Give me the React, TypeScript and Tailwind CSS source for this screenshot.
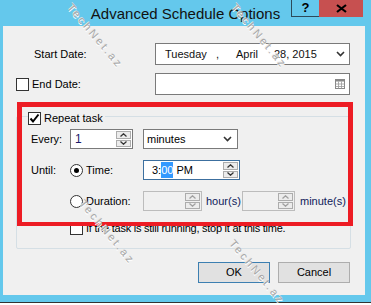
import React from "react";

const font = { fontFamily: '"Liberation Sans", Arial, sans-serif' };

function Chevron({ up = false, className = "" }: { up?: boolean; className?: string }) {
  return (
    <svg width="9" height="6" viewBox="0 0 9 6" className={className}>
      <path
        d={up ? "M1 5 L4.5 1.5 L8 5" : "M1 1 L4.5 4.5 L8 1"}
        fill="none"
        stroke="#333"
        strokeWidth="1.6"
      />
    </svg>
  );
}

function SmallChev({ up = false, color = "#333" }: { up?: boolean; color?: string }) {
  return (
    <svg width="7" height="4" viewBox="0 0 7 4">
      <path d={up ? "M0.5 3.5 L3.5 0.8 L6.5 3.5" : "M0.5 0.5 L3.5 3.2 L6.5 0.5"} fill="none" stroke={color} strokeWidth="1.3" />
    </svg>
  );
}

function Spinner({ disabled = false }: { disabled?: boolean }) {
  const c = disabled ? "#a0a0a0" : "#333";
  return (
    <div className="flex flex-col w-[17px] h-full gap-[1px] p-[1px]">
      <div className="flex-1 flex items-center justify-center border border-[#acacac] bg-[#ececec]">
        <SmallChev up color={c} />
      </div>
      <div className="flex-1 flex items-center justify-center border border-[#acacac] bg-[#ececec]">
        <SmallChev color={c} />
      </div>
    </div>
  );
}

function Checkbox({ checked = false }: { checked?: boolean }) {
  return (
    <div className="w-[13px] h-[13px] border border-[#333] bg-white flex items-center justify-center shrink-0">
      {checked && (
        <svg width="11" height="11" viewBox="0 0 11 11">
          <path d="M1.5 5.5 L4 8.5 L9.5 1.5" fill="none" stroke="#000" strokeWidth="2" />
        </svg>
      )}
    </div>
  );
}

function Radio({ checked = false }: { checked?: boolean }) {
  return (
    <div className="w-[13px] h-[13px] rounded-full border border-[#333] bg-white flex items-center justify-center shrink-0">
      {checked && <div className="w-[5px] h-[5px] rounded-full bg-black" />}
    </div>
  );
}

function Watermark({ left, top }: { left: number; top: number }) {
  return (
    <div
      className="absolute origin-top-left rotate-[50deg] text-[11px] tracking-[2.5px] text-[#a8a8a8] whitespace-nowrap pointer-events-none"
      style={{ left, top, textShadow: "1px 1px 0 #ffffff, -1px 0 0 #e8e8e8", ...font }}
    >
      TechNet.az
    </div>
  );
}

export default function App() {
  return (
    <div className="w-[371px] h-[305px] bg-white relative overflow-hidden text-[11px] text-black" style={font}>
      <div className="h-[303px] bg-[#64c8ec] border-b border-[#333] flex flex-col">
        {/* Title bar */}
        <div className="h-[26px] relative flex">
          <div className="absolute left-0 right-0 top-[3px] text-center text-[15px] text-[#111]">
            Advanced Schedule Options
          </div>
          <div className="ml-auto mr-[8px] flex h-[17px]">
            <div className="w-[28px] border-l border-b border-[#2c4a5a] flex items-center justify-center font-bold text-[13px]">
              ?
            </div>
            <div className="w-[44px] bg-[#c75050] flex items-center justify-center">
              <svg width="11" height="9" viewBox="0 0 11 9">
                <path d="M1 1 L10 8 M10 1 L1 8" stroke="#000" strokeWidth="2.2" />
              </svg>
            </div>
          </div>
        </div>
        {/* Client */}
        <div className="ml-[3px] w-[362px] h-[269px] bg-[#f0f0f0] relative">
          {/* Start date */}
          <div className="pt-[17px] flex items-center h-[39px]">
            <div className="pl-[31px] w-[152px]">Start Date:</div>
            <div className="w-[195px] h-[22px] border border-[#7a7a7a] bg-white flex items-center text-[11px] text-[#111]">
              <span className="pl-[9px] w-[60px]">Tuesday</span>
              <span className="w-[20px]">,</span>
              <span className="w-[38px]">April</span>
              <span>28, 2015</span>
              <span className="ml-auto mr-[4px]">
                <Chevron />
              </span>
            </div>
          </div>
          {/* End date */}
          <div className="mt-[8px] flex items-center h-[22px]">
            <div className="pl-[13px] w-[152px] flex items-center">
              <Checkbox />
              <span className="ml-[3px]">End Date:</span>
            </div>
            <div className="w-[195px] h-[22px] border border-[#7a7a7a] bg-white flex items-center">
              <svg width="10" height="10" viewBox="0 0 10 10" className="ml-auto mr-[4px]">
                <rect x="0.5" y="0.5" width="9" height="9" fill="#fff" stroke="#888" />
                <rect x="0.5" y="0.5" width="9" height="2" fill="#888" />
                <path d="M0.5 5 H9.5 M0.5 7.5 H9.5 M3.5 2.5 V9.5 M6.5 2.5 V9.5" stroke="#999" strokeWidth="0.8" />
              </svg>
            </div>
          </div>
          {/* Group box */}
          <div className="mt-[21px] ml-[13px] w-[335px] h-[133px] border border-[#d5dfe5] rounded-[2px] relative">
            <div className="absolute top-[-7px] left-[11px] bg-[#f0f0f0] flex items-center pr-[2px]">
              <Checkbox checked />
              <span className="ml-[3px]">Repeat task</span>
            </div>
            {/* Every */}
            <div className="mt-[12px] flex items-center h-[20px]">
              <div className="pl-[14px] w-[53px]">Every:</div>
              <div className="w-[63px] h-[20px] border border-[#7a7a7a] bg-white flex items-center">
                <span className="pl-[4px] text-[12px] text-[#1a1a6a]">1</span>
                <div className="ml-auto h-full">
                  <Spinner />
                </div>
              </div>
              <div className="ml-[10px] w-[95px] h-[20px] border border-[#7a7a7a] bg-white flex items-center">
                <span className="pl-[3px]">minutes</span>
                <span className="ml-auto mr-[5px]">
                  <Chevron />
                </span>
              </div>
            </div>
            {/* Until */}
            <div className="mt-[11px] flex items-center h-[20px]">
              <div className="pl-[14px] w-[53px]">Until:</div>
              <Radio checked />
              <span className="ml-[3px] w-[57px]">Time:</span>
              <div className="w-[97px] h-[20px] border border-[#3c6f9f] bg-white flex items-center">
                <span className="pl-[8px]">3:</span>
                <span className="bg-[#3399ff] text-white">00</span>
                <span className="ml-[3px]">PM</span>
                <div className="ml-auto h-full">
                  <Spinner />
                </div>
              </div>
            </div>
            {/* Duration */}
            <div className="mt-[11px] flex items-center h-[20px]">
              <div className="w-[53px]" />
              <Radio />
              <span className="ml-[3px] w-[57px]">Duration:</span>
              <div className="w-[59px] h-[20px] border border-[#bcbcbc] bg-[#f0f0f0] flex">
                <div className="ml-auto h-full">
                  <Spinner disabled />
                </div>
              </div>
              <span className="ml-[4px] w-[36px] text-[#0f1a5a]">hour(s)</span>
              <div className="w-[53px] h-[20px] border border-[#bcbcbc] bg-[#f0f0f0] flex">
                <div className="ml-auto h-full">
                  <Spinner disabled />
                </div>
              </div>
              <span className="ml-[5px] text-[#0f1a5a]">minute(s)</span>
            </div>
            {/* Stop checkbox */}
            <div className="mt-[11px] flex items-center h-[13px]">
              <div className="w-[53px]" />
              <Checkbox />
              <span className="ml-[3px] tracking-[-0.25px]">If the task is still running, stop it at this time.</span>
            </div>
          </div>
          {/* Buttons */}
          <div className="mt-[13px] flex justify-end pr-[15px] gap-[8px]">
            <div className="w-[72px] h-[21px] border border-[#3c7fb1] bg-[#e1e1e1] flex items-center justify-center">
              OK
            </div>
            <div className="w-[72px] h-[21px] border border-[#adadad] bg-[#e1e1e1] flex items-center justify-center">
              Cancel
            </div>
          </div>
        </div>
      </div>
      {/* Red highlight */}
      <div className="absolute left-[17px] top-[102px] w-[336px] h-[124px] border-[5px] border-b-[4px] border-[#ed1c24] pointer-events-none" />
      {/* Watermarks */}
      <Watermark left={76} top={0} />
      <Watermark left={240} top={0} />
      <Watermark left={88} top={196} />
      <Watermark left={238} top={236} />
    </div>
  );
}
